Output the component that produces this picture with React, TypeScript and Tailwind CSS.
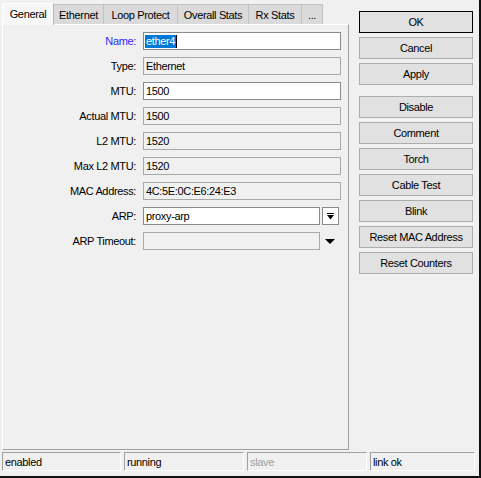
import React from "react";

const font = { fontFamily: '"Liberation Sans", Arial, sans-serif' };

function Field({
  label,
  value,
  enabled,
  blue,
  children,
}: {
  label: string;
  value?: string;
  enabled?: boolean;
  blue?: boolean;
  children?: React.ReactNode;
}) {
  return (
    <div className="flex items-center h-[18px]">
      <div
        className={
          "w-[134px] text-right pr-[1px] leading-none " +
          (blue ? "text-[#2a2aff]" : "text-black")
        }
      >
        {label}
      </div>
      <div className="ml-[6px] flex items-center">
        {children ?? (
          <div
            className={
              "w-[198px] h-[18px] border flex items-center pl-[2px] leading-none " +
              (enabled
                ? "bg-white border-[#8a8a8a]"
                : "bg-[#f0f0f0] border-[#a8a8a8]")
            }
          >
            {value}
          </div>
        )}
      </div>
    </div>
  );
}

function Btn({ label, def }: { label: string; def?: boolean }) {
  return (
    <div
      className={
        "h-[22px] w-[114px] flex items-center justify-center bg-[#e1e1e1] border leading-none " +
        (def ? "border-black" : "border-[#adadad]")
      }
    >
      {label}
    </div>
  );
}

const tabs = [
  { label: "Ethernet", w: 50 },
  { label: "Loop Protect", w: 74 },
  { label: "Overall Stats", w: 71 },
  { label: "Rx Stats", w: 53 },
  { label: "...", w: 21 },
];

function Status({ label, w, muted }: { label: string; w: number; muted?: boolean }) {
  return (
    <div
      className={
        "h-[19px] border border-t-[#a0a0a0] border-l-[#a0a0a0] border-b-white border-r-white flex items-center pl-[2px] pt-[1px] leading-none " +
        (muted ? "text-[#a0a0a0]" : "text-black")
      }
      style={{ width: w }}
    >
      {label}
    </div>
  );
}

export default function App() {
  return (
    <div
      className="w-[481px] h-[478px] bg-[#f0f0f0] border-r-2 border-b-2 border-[#111] flex flex-col text-[11px] tracking-[-0.35px] text-black select-none"
      style={font}
    >
      <div className="flex h-[450px]">
        <div className="ml-[2px] mt-[2px] w-[347px] flex flex-col">
          <div className="flex h-[22px] items-end">
            <div className="h-[22px] w-[52px] bg-[#f7f7f7] border-t border-l border-white border-r border-r-[#b8b8b8] flex items-center justify-center pb-[1px] relative z-10 -mb-[1px]">
              General
            </div>
            {tabs.map((t) => (
              <div
                key={t.label}
                className="h-[20px] bg-[#dadada] border-t border-r border-[#c2c2c2] flex items-center justify-center pt-[1px] leading-none"
                style={{ width: t.w }}
              >
                {t.label}
              </div>
            ))}
          </div>
          <div className="flex-1 border-t border-l border-white border-r border-b border-r-[#a0a0a0] border-b-[#a0a0a0] bg-[#f0f0f0] pt-[7px] flex flex-col gap-[7px]">
            <Field label="Name:" blue>
              <div className="w-[198px] h-[18px] border border-[#8a8a8a] bg-white flex items-center pl-[2px]">
                <span className="bg-[#0078d7] text-white leading-[13px] px-[1px] -ml-[1px]">ether4</span>
                <span className="w-[1px] h-[13px] bg-black"></span>
              </div>
            </Field>
            <Field label="Type:" value="Ethernet" />
            <Field label="MTU:" value="1500" enabled />
            <Field label="Actual MTU:" value="1500" />
            <Field label="L2 MTU:" value="1520" />
            <Field label="Max L2 MTU:" value="1520" />
            <Field label="MAC Address:" value="4C:5E:0C:E6:24:E3" />
            <Field label="ARP:">
              <div className="w-[177px] h-[18px] border border-[#8a8a8a] bg-white flex items-center pl-[2px]">
                proxy-arp
              </div>
              <div className="ml-[2px] w-[17px] h-[18px] border border-[#8a8a8a] bg-white flex items-center justify-center">
                <svg width="9" height="9" viewBox="0 0 9 9">
                  <rect x="1" y="1" width="7" height="1" fill="#000" />
                  <polygon points="1,3 8,3 4.5,7.5" fill="#000" />
                </svg>
              </div>
            </Field>
            <Field label="ARP Timeout:">
              <div className="w-[177px] h-[18px] border border-[#a8a8a8] bg-[#f0f0f0]"></div>
              <div className="ml-[2px] w-[17px] h-[18px] flex items-center justify-center">
                <svg width="11" height="7" viewBox="0 0 11 7">
                  <polygon points="0,1 10,1 5,6" fill="#000" />
                </svg>
              </div>
            </Field>
          </div>
        </div>
        <div className="ml-[10px] mt-[11px] flex flex-col gap-[4px]">
          <Btn label="OK" def />
          <Btn label="Cancel" />
          <Btn label="Apply" />
          <div className="h-[3px]"></div>
          <Btn label="Disable" />
          <Btn label="Comment" />
          <Btn label="Torch" />
          <Btn label="Cable Test" />
          <Btn label="Blink" />
          <Btn label="Reset MAC Address" />
          <Btn label="Reset Counters" />
        </div>
      </div>
      <div className="flex gap-[3px] ml-[2px] mt-[2px]">
        <Status label="enabled" w={119} />
        <Status label="running" w={120} />
        <Status label="slave" w={120} muted />
        <Status label="link ok" w={105} />
      </div>
    </div>
  );
}
